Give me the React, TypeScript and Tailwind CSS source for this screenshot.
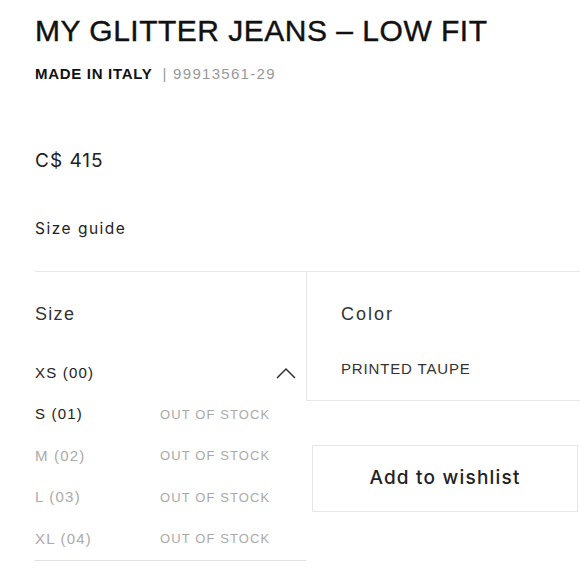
const SIZES = [
  { label: 'XS (00)', available: true, selected: true },
  { label: 'S (01)', available: true, selected: false, note: 'OUT OF STOCK' },
  { label: 'M (02)', available: false, selected: false, note: 'OUT OF STOCK' },
  { label: 'L (03)', available: false, selected: false, note: 'OUT OF STOCK' },
  { label: 'XL (04)', available: false, selected: false, note: 'OUT OF STOCK' },
];

export default function App() {
  return (
    <div className="w-[580px] h-[580px] overflow-hidden bg-white pl-[35px] pt-[13px] font-['Liberation_Sans',Arial,sans-serif] text-[#111]">
      <h1 className="text-[30px] leading-[36px] font-medium tracking-[0.5px] whitespace-nowrap [-webkit-text-stroke:0.4px_#111]">
        MY GLITTER JEANS – LOW FIT
      </h1>
      <div className="mt-[16px] flex items-center text-[15px] leading-[18px]">
        <span className="font-bold tracking-[0.7px]">MADE IN ITALY</span>
        <span className="ml-[10px] text-[15px] text-[#999] tracking-[1.3px]">| 99913561-29</span>
      </div>

      <div className="mt-[66px] font-['Inter',sans-serif] text-[19px] leading-[24px] tracking-[1px] text-[#222]">
        C$ 415
      </div>
      <div className="mt-[45px] font-['Inter',sans-serif] text-[15.5px] leading-[22px] tracking-[1.5px] text-[#222]">
        Size guide
      </div>

      <div className="mt-[31px] grid grid-cols-[271px_1fr] border-t border-[#e6e6e6]">
        <div className="flex flex-col">
          <div className="h-[80px] pt-[4px] flex items-center text-[18px] tracking-[1.3px] text-[#333]">Size</div>
          {SIZES.map((s) => (
            <div key={s.label} className="h-[41.5px] flex items-center text-[15px] tracking-[1.2px]">
              <span
                className={
                  'w-[125px] ' +
                  (s.available ? 'text-[#222]' : 'text-[#aaa]')
                }
              >
                {s.label}
              </span>
              {s.note && (
                <span className="text-[13px] tracking-[1.1px] text-[#aaa]">{s.note}</span>
              )}
              {s.selected && (
                <svg
                  className="ml-auto mr-[10px]"
                  width="20"
                  height="12"
                  viewBox="0 0 20 12"
                  fill="none"
                  stroke="#333"
                  strokeWidth="1.5"
                >
                  <path d="M1 11 L10 2 L19 11" />
                </svg>
              )}
            </div>
          ))}
          <div className="border-t border-[#e0e0e0]" />
        </div>

        <div className="flex flex-col">
          <div className="border-l border-b border-[#e6e6e6] pl-[34px] h-[129px]">
            <div className="h-[84px] flex items-center text-[18px] tracking-[2px] text-[#333]">Color</div>
            <div className="mt-[3px] text-[15px] leading-[20px] tracking-[0.85px] text-[#333]">PRINTED TAUPE</div>
          </div>
          <button className="mt-[44px] ml-[6px] mr-[2px] h-[67px] border border-[#e6e6e6] bg-white font-['Inter',sans-serif] text-[19px] font-medium tracking-[1.2px] text-[#222]">
            Add to wishlist
          </button>
        </div>
      </div>
    </div>
  );
}
